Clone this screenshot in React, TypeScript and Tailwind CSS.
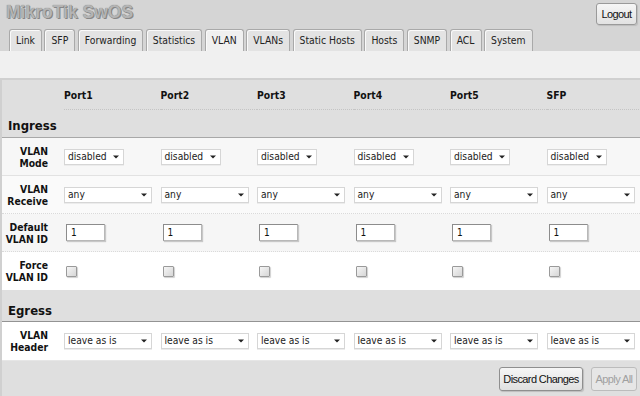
import React from "react";

const ports = ["Port1", "Port2", "Port3", "Port4", "Port5", "SFP"];
const tabs = ["Link", "SFP", "Forwarding", "Statistics", "VLAN", "VLANs", "Static Hosts", "Hosts", "SNMP", "ACL", "System"];

function Select({ value, wide }: { value: string; wide?: boolean }) {
  return (
    <div
      className={`${wide ? "w-[88px]" : "w-[60px]"} h-[16px] flex items-center justify-between bg-white border border-[#d6d6d6] pl-[3px] pr-[4px] text-[10.2px] text-[#222] shadow-[0_1px_0_#ececec]`}
    >
      <span>{value}</span>
      <svg width="6" height="4" viewBox="0 0 6 4">
        <path d="M0 0.5h6L3 3.5z" fill="#222" />
      </svg>
    </div>
  );
}

function TextBox({ value }: { value: string }) {
  return (
    <div className="ml-[2px] w-[39px] h-[17px] flex items-center bg-white border border-[#8c8c8c] border-r-[#b8b8b8] border-b-[#b8b8b8] pl-[4px] text-[10px] text-[#111] shadow-[1px_1px_1px_#c8c8c8]">
      {value}
    </div>
  );
}

function Check() {
  return (
    <div className="ml-[2px] mt-[1px] w-[11px] h-[11px] border border-[#9a9a9a] rounded-[1px] bg-gradient-to-br from-[#f6f6f6] to-[#d6d6d6] shadow-[1px_1px_1px_#d0d0d0]" />
  );
}

function Row({ label1, label2, bg, border, tall, children }: { label1: string; label2: string; bg: string; border: string; tall?: boolean; children: (i: number) => React.ReactNode }) {
  return (
    <div className={`grid grid-cols-[62px_repeat(6,96.5px)] items-center overflow-hidden border-b ${tall ? "h-[39px]" : "h-[38px]"} ${bg} ${border}`}>
      <div className="text-right pr-[16px] font-bold text-[10.3px] leading-[12px] text-[#111]">
        <div>{label1}</div>
        <div>{label2}</div>
      </div>
      {ports.map((p, i) => (
        <div key={p} className="flex items-center">{children(i)}</div>
      ))}
    </div>
  );
}

export default function App() {
  return (
    <div className="w-[640px] h-[396px] overflow-hidden bg-[#d5d5d5] font-['DejaVu_Sans_Condensed','DejaVu_Sans',sans-serif]">
      {/* header */}
      <div className="flex justify-between items-start h-[29px] pt-[3px] pl-[6px] pr-[3px]">
        <div className="font-['Liberation_Sans',Arial,sans-serif] font-bold text-[17.5px] leading-[18px] text-[#b4b4b4] [text-shadow:0_0_1px_#6e6e6e,1px_1px_0_#8a8a8a]">
          MikroTik SwOS
        </div>
        <button className="w-[41px] h-[22px] bg-gradient-to-b from-[#f6f6f6] to-[#e2e2e2] border border-[#9a9a9a] rounded-[3px] font-['Liberation_Sans',Arial,sans-serif] text-[11px] tracking-[-0.6px] text-[#111] shadow-[1px_1px_1px_#bdbdbd]">
          Logout
        </button>
      </div>

      {/* tabs */}
      <div className="flex gap-[2.5px] pl-[9px] h-[22px] items-end">
        {tabs.map(t => (
          <div
            key={t}
            className={`h-[22px] px-[6px] pt-[3px] border border-b-0 border-[#a9a9a9] rounded-t-[3px] text-[10.3px] text-[#222] shadow-[inset_1px_1px_0_#fafafa] ${
              t === "VLAN" ? "bg-[#f0f0f0]" : "bg-[#e3e3e3]"
            }`}
          >
            {t}
          </div>
        ))}
      </div>

      {/* band */}
      <div className="h-[27px] bg-[#f0f0f0]" />

      {/* content */}
      <div className="h-[320px] bg-[#dfdfdf] border-t-2 border-l-2 border-[#d0d0d0]">
        <div className="grid grid-cols-[62px_repeat(6,96.5px)] items-center h-[30px] overflow-hidden">
          <div />
          {ports.map(p => (
            <div key={p} className="font-bold text-[10.3px] text-[#111] pt-[2px] h-full flex items-center border-b border-dotted border-[#c4c4c4]">
              {p}
            </div>
          ))}
        </div>
        <div className="h-[28px] flex items-end pl-[6px] pb-[2px] font-bold text-[13px] text-[#111] border-b border-[#a8a8a8]">
          Ingress
        </div>

        <Row label1="VLAN" label2="Mode" bg="bg-[#f7f7f7]" border="border-[#e2e2e2]">
          {() => <Select value="disabled" />}
        </Row>
        <Row label1="VLAN" label2="Receive" bg="bg-[#fafafa]" border="border-dotted border-[#dadada]">
          {() => <Select value="any" wide />}
        </Row>
        <Row label1="Default" label2="VLAN ID" bg="bg-[#f6f6f6]" border="border-dotted border-[#dadada]">
          {() => <TextBox value="1" />}
        </Row>
        <Row label1="Force" label2="VLAN ID" bg="bg-white" border="border-[#dfdfdf]" tall>
          {() => <Check />}
        </Row>

        <div className="h-[31px] flex items-end pl-[6px] pb-[1px] font-bold text-[13px] text-[#111] border-b border-[#939393]">
          Egress
        </div>
        <Row label1="VLAN" label2="Header" bg="bg-white" border="border-[#e6e6e6]" tall>
          {() => <Select value="leave as is" wide />}
        </Row>

        <div className="flex justify-end gap-[8px] pt-[6px] pr-[3px]">
          <button className="w-[84px] h-[24px] bg-gradient-to-b from-[#f6f6f6] to-[#e0e0e0] border border-[#8f8f8f] rounded-[3px] font-['Liberation_Sans',Arial,sans-serif] text-[11px] tracking-[-0.6px] text-[#111] shadow-[1px_1px_1px_#bdbdbd]">
            Discard Changes
          </button>
          <button className="w-[46px] h-[24px] bg-[#e6e6e6] border border-[#bcbcbc] rounded-[3px] font-['Liberation_Sans',Arial,sans-serif] text-[11px] tracking-[-0.6px] text-[#a0a0a0]">
            Apply All
          </button>
        </div>
      </div>
    </div>
  );
}
